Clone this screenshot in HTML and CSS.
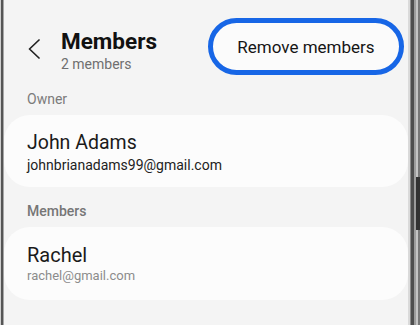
FILE: index.html
```html
<!DOCTYPE html>
<html lang="en">
<head>
  <meta charset="UTF-8">
  <title>Members</title>
  <link rel="stylesheet" href="styles.css">
</head>
<body>

<div class="device">
  <div class="bezel-left"></div>

  <div class="screen">
    <!-- top bar -->
    <div class="header">
      <div class="back">
        <svg width="12" height="20" viewBox="0 0 12 20">
          <polyline points="11,1 1.5,10 11,19" fill="none" stroke="#222" stroke-width="1.7" stroke-linecap="round" stroke-linejoin="round"/>
        </svg>
      </div>
      <div class="titles">
        <div class="title">Members</div>
        <div class="subtitle">2 members</div>
      </div>
      <button class="remove-btn">Remove members</button>
    </div>

    <div class="section-label">Owner</div>
    <div class="card">
      <div class="name">John Adams</div>
      <div class="email">johnbrianadams99@gmail.com</div>
    </div>

    <div class="section-label bold">Members</div>
    <div class="card card-member">
      <div class="name">Rachel</div>
      <div class="email">rachel@gmail.com</div>
    </div>
  </div>

  <div class="bezel-right">
    <div class="side-key"></div>
  </div>
</div>

</body>
</html>
```

FILE: styles.css
```css
/* page */
body {
  margin: 0;
  width: 420px;
  height: 325px;
  overflow: hidden;
  font-family: Roboto, "Liberation Sans", sans-serif;
  background: #f4f4f4;
}

/* phone frame */
.device {
  display: flex;
  height: 325px;
}
.bezel-left {
  width: 4px;
  background: linear-gradient(to right, #cfcfcf 0 1px, #555 1px 3px, #a8a8a8 3px 4px);
}
.bezel-right {
  position: relative;
  width: 12px;
  background: linear-gradient(to right, #dadada 0 2px, #8a8a8a 2px 3px, #4e4e4e 3px 6px, #9c9c9c 6px 8px, #c4c4c4 8px 10px, #777 10px 12px);
}
.side-key {
  position: absolute;
  right: 0;
  top: 177px;
  width: 4px;
  height: 53px;
  background: #333;
}

.screen {
  flex: 1;
  padding-top: 18px;
  background: #f4f4f4;
}

/* header */
.header {
  display: flex;
  align-items: flex-start;
  height: 57px;
}
.back {
  margin: 21px 21px 0 24px;
  height: 20px;
}
.back svg {
  display: block;
}
.titles {
  margin-top: 10px;
}
.title {
  font-size: 22.5px;
  font-weight: 700;
  line-height: 26px;
  color: #111;
}
.subtitle {
  margin-top: 1px;
  font-size: 14px;
  line-height: 18px;
  color: #6f6f6f;
}
.remove-btn {
  margin-left: auto;
  margin-right: 4px;
  width: 196px;
  height: 57px;
  box-sizing: border-box;
  border: 5px solid #1766e6;
  border-radius: 29px;
  background: #fbfbfb;
  font-family: Roboto, "Liberation Sans", sans-serif;
  font-size: 17px;
  color: #151515;
  padding: 0;
}

/* lists */
.section-label {
  margin-top: 15px;
  padding-left: 23px;
  font-size: 14px;
  line-height: 18px;
  color: #7b7b7b;
}
.section-label.bold {
  font-weight: 500;
  color: #767676;
}
.card {
  margin-top: 7px;
  padding: 17px 23px 12px;
  border-radius: 26px;
  background: #fcfcfc;
}
.name {
  font-size: 19.5px;
  line-height: 22px;
  color: #1a1a1a;
}
.email {
  margin-top: 1px;
  font-size: 14px;
  line-height: 20px;
  color: #222;
}
.card-member {
  padding-bottom: 14px;
}
.card-member .name {
  font-size: 20px;
}
.card-member .email {
  margin-top: 0;
  font-size: 13px;
  color: #8c8c8c;
}
```
